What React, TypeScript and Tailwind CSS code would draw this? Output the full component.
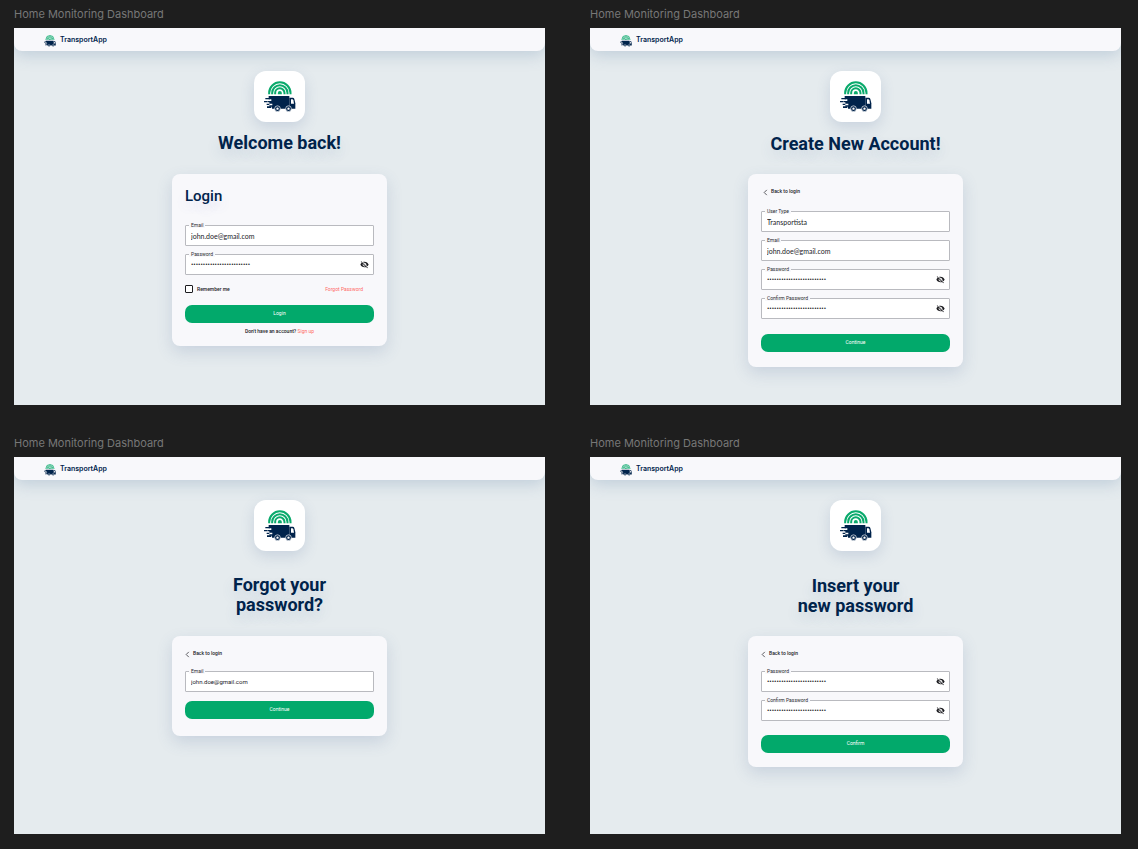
import { useId, type ReactNode } from "react";

function TruckLogo({ className }: { className: string }) {
  return (
    <svg viewBox="0 0 96 96" className={className} aria-hidden="true">
      <g fill="none" stroke="#0aaa6c" strokeWidth="6">
        <path d="M15.500 40V36a32 32 0 0 1 64 0V40" />
        <path d="M24.500 40V36a23 23 0 0 1 46 0V40" />
        <path d="M33.500 40V36a14 14 0 0 1 28 0V40" />
      </g>
      <path d="M41.500 40v-4a6 6 0 0 1 12 0v4z" fill="#0aaa6c" />
      <g fill="#00234b">
        <path d="M14 45h62v38H24v-6h-8v-4h9v-5h-9v-4h-6v-4h12v-5h-8z" />
        <path d="M76 50h10q4 0 5 4l3 13v16H76z" />
        <path d="M4 51h14v4H4zM0 60h9v4H0zM8 68h8v4H8zM9 76h13v5H9z" />
      </g>
      <path d="M81 55h4q2 0 3 3l2 10h-9z" fill="#fff" />
      <g fill="#00234b" stroke="#fff" strokeWidth="2">
        <circle cx="40.500" cy="83" r="8.500" />
        <circle cx="73.500" cy="83" r="8.500" />
      </g>
      <circle cx="40.500" cy="83" r="3.500" fill="#fff" />
      <circle cx="73.500" cy="83" r="3.500" fill="#fff" />
    </svg>
  );
}

function EyeOff() {
  return (
    <svg viewBox="0 0 24 24" className="size-[9px]" fill="#1b1b1f" aria-hidden="true">
      <path d="M12 7c2.760 0 5 2.240 5 5 0 .65-.13 1.260-.36 1.830l2.920 2.920c1.510-1.260 2.700-2.890 3.430-4.750-1.730-4.390-6-7.500-11-7.500-1.400 0-2.740.25-3.980.7l2.160 2.160C10.740 7.130 11.350 7 12 7zM2 4.270l2.280 2.280.46.46C3.080 8.300 1.780 10.020 1 12c1.730 4.390 6 7.500 11 7.500 1.550 0 3.030-.3 4.380-.84l.42.42L19.730 22 21 20.730 3.270 3 2 4.270zM7.530 9.800l1.550 1.550c-.05.21-.08.43-.08.65 0 1.660 1.340 3 3 3 .22 0 .44-.03.65-.08l1.550 1.550c-.67.33-1.410.53-2.200.53-2.760 0-5-2.240-5-5 0-.79.2-1.530.53-2.200zm4.310-.78l3.150 3.150.02-.16c0-1.660-1.340-3-3-3l-.17.01z" />
    </svg>
  );
}

type FieldProps = {
  label: string;
  type?: "text" | "email" | "password";
  value: string;
  valueClass?: string;
};

function Field({ label, type = "text", value, valueClass = "text-[7px]" }: FieldProps) {
  const id = useId();
  return (
    <div className="relative flex h-[21px] items-center rounded-[1px] border border-[#b9babf] bg-white">
      <label
        htmlFor={id}
        className="absolute -top-1 left-[3px] bg-[#f8f8fb] px-0.5 text-[5px] leading-[6px] text-[#2b2b30]"
      >
        {label}
      </label>
      <input
        id={id}
        type={type}
        defaultValue={value}
        className={`h-full min-w-0 flex-1 bg-transparent pl-[5px] text-[#1b1b1f] outline-none ${valueClass}`}
      />
      {type === "password" && (
        <button type="button" aria-label="Show password" className="mr-1">
          <EyeOff />
        </button>
      )}
    </div>
  );
}

const EMAIL = "john.doe@gmail.com";
const SECRET = "transport-app-password-25";
const WIDE = "font-['Lato',sans-serif] text-[7px]";
const NARROW = "font-['Roboto',sans-serif] text-[6px]";
const DOTS = "font-['Roboto',sans-serif] text-[7px]";

function Submit({ children }: { children: ReactNode }) {
  return (
    <button
      type="submit"
      className="h-[18px] w-full rounded-[7px] bg-[#02a96b] text-[5px] text-white"
    >
      {children}
    </button>
  );
}

function BackLink() {
  return (
    <a href="#login" className="flex h-2 items-center gap-[3px] text-[5px] font-medium text-[#1b1b1f]">
      <svg viewBox="0 0 5 8" className="h-[7px] w-[5px]" fill="none" stroke="#1b1b1f" strokeWidth="0.8" aria-hidden="true">
        <path d="M4 1L1 4l3 3" />
      </svg>
      Back to login
    </a>
  );
}

function Screen({ title, titleClass, children }: { title: ReactNode; titleClass: string; children: ReactNode }) {
  return (
    <section className="flex flex-col">
      <p className="flex h-7 items-center font-['Inter',sans-serif] text-[11px] text-[#777777]">
        Home Monitoring Dashboard
      </p>
      <div className="flex min-h-[377px] flex-1 flex-col overflow-hidden bg-[#e5ebee]">
        <header className="flex h-[23px] items-center gap-1 rounded-b-lg bg-[#f8f8fb] px-[30px] pt-0.5 shadow-[0_4px_16px_rgba(80,120,160,0.26)]">
          <TruckLogo className="size-3" />
          <span className="font-['Inter',sans-serif] text-[7px] font-semibold text-[#00234b]">TransportApp</span>
        </header>
        <main className="flex flex-col items-center pt-5">
          <div className="flex size-[51px] items-center justify-center rounded-xl bg-white shadow-[0_5px_14px_rgba(70,100,150,0.18)]">
            <TruckLogo className="size-8" />
          </div>
          <h1
            className={`text-center text-[18px] leading-5 font-bold text-[#00234b] [text-shadow:0_6px_14px_rgba(70,100,150,0.16)] ${titleClass}`}
          >
            {title}
          </h1>
          <form
            onSubmit={(e) => e.preventDefault()}
            className="flex w-[215px] flex-col rounded-lg bg-[#f8f8fb] px-[13px] shadow-[0_6px_16px_rgba(70,100,150,0.18)]"
          >
            {children}
          </form>
        </main>
      </div>
    </section>
  );
}

export default function App() {
  return (
    <div className="grid min-h-screen grid-cols-2 content-start gap-x-[45px] gap-y-6 bg-[#1e1e1e] pr-[17px] pb-[15px] pl-3.5 font-['Roboto',sans-serif]">
      <Screen title="Welcome back!" titleClass="pt-[11px] pb-[21px]">
        <h2 className="pt-3 text-[15px] leading-5 font-medium text-[#00234b] [text-shadow:0_6px_12px_rgba(90,90,200,0.14)]">
          Login
        </h2>
        <div className="flex flex-col gap-2 pt-[19px]">
          <Field label="Email" type="email" value={EMAIL} valueClass={WIDE} />
          <Field label="Password" type="password" value={SECRET} valueClass={DOTS} />
        </div>
        <div className="flex items-center justify-between pt-2.5 pr-[11px] pb-3 text-[5px] leading-2">
          <label className="flex items-center gap-1 font-medium text-[#1b1b1f]">
            <input
              type="checkbox"
              className="size-2 appearance-none rounded-[1px] border border-[#1b1b1f] bg-white checked:bg-[#02a96b]"
            />
            Remember me
          </label>
          <a href="#forgot" className="text-[#ff6b66]">
            Forgot Password
          </a>
        </div>
        <Submit>Login</Submit>
        <p className="pt-1 pb-[11px] text-center text-[5px] leading-2 font-medium text-[#1b1b1f]">
          Don't have an account?{" "}
          <a href="#signup" className="font-normal text-[#ff6b66]">
            Sign up
          </a>
        </p>
      </Screen>

      <Screen title="Create New Account!" titleClass="pt-3 pb-5">
        <div className="pt-[14px] pl-0.5">
          <BackLink />
        </div>
        <div className="flex flex-col gap-2 pt-[15px] pb-[15px]">
          <Field label="User Type" value="Transportista" valueClass={WIDE} />
          <Field label="Email" type="email" value={EMAIL} valueClass={WIDE} />
          <Field label="Password" type="password" value={SECRET} valueClass={DOTS} />
          <Field label="Confirm Password" type="password" value={SECRET} valueClass={DOTS} />
        </div>
        <Submit>Continue</Submit>
        <div className="h-[15px]" />
      </Screen>

      <Screen
        title={
          <>
            Forgot your
            <br />
            password?
          </>
        }
        titleClass="pt-6 pb-[21px]"
      >
        <div className="pt-[14px]">
          <BackLink />
        </div>
        <div className="pt-[13px] pb-[9px]">
          <Field label="Email" type="email" value={EMAIL} valueClass={NARROW} />
        </div>
        <Submit>Continue</Submit>
        <div className="h-[17px]" />
      </Screen>

      <Screen
        title={
          <>
            Insert your
            <br />
            new password
          </>
        }
        titleClass="pt-[25px] pb-5"
      >
        <div className="pt-[14px]">
          <BackLink />
        </div>
        <div className="flex flex-col gap-2 pt-[13px] pb-[14px]">
          <Field label="Password" type="password" value={SECRET} valueClass={DOTS} />
          <Field label="Confirm Password" type="password" value={SECRET} valueClass={DOTS} />
        </div>
        <Submit>Confirm</Submit>
        <div className="h-[14px]" />
      </Screen>
    </div>
  );
}
